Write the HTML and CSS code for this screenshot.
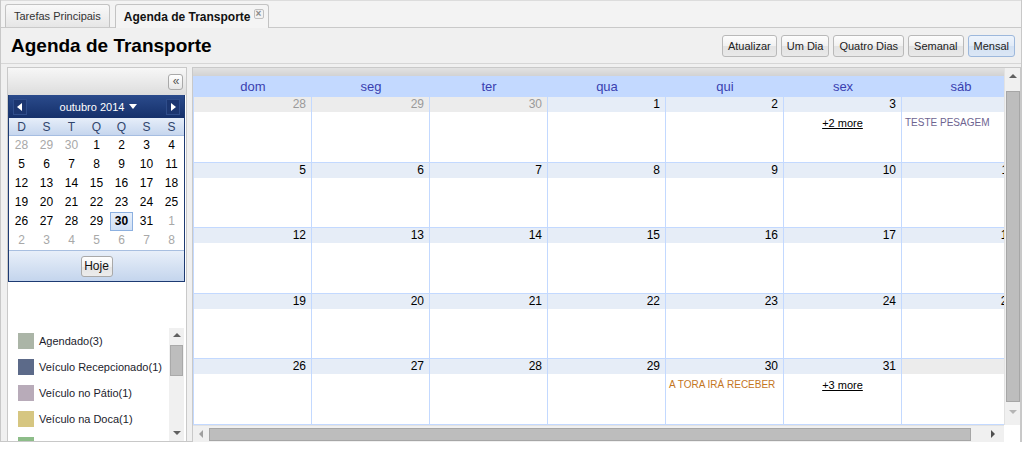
FILE: index.html
```html
<!DOCTYPE html>
<html lang="pt">
<head>
<meta charset="utf-8">
<title>Agenda de Transporte</title>
<link rel="stylesheet" href="styles.css">
</head>
<body>
<div class="app">
  <div class="tabbar">
    <div class="tab">Tarefas Principais</div>
    <div class="tab active">Agenda de Transporte <span class="tab-close">×</span></div>
  </div>
  <div class="main">
    <div class="header">
      <h1 class="title">Agenda de Transporte</h1>
      <div class="btns">
        <button class="btn">Atualizar</button>
        <button class="btn">Um Dia</button>
        <button class="btn">Quatro Dias</button>
        <button class="btn">Semanal</button>
        <button class="btn on">Mensal</button>
      </div>
    </div>
    <div class="content">
      <div class="side">
        <div class="side-bar"><span class="collapse">«</span></div>
        <div class="mini">
          <div class="mini-head">
            <span class="arr"><svg width="6" height="8" viewBox="0 0 6 8"><path d="M5 0 L0 4 L5 8Z" fill="#fff"/></svg></span>
            <span class="month">outubro 2014 <svg width="8" height="5" viewBox="0 0 8 5"><path d="M0 0 H8 L4 5Z" fill="#fff"/></svg></span>
            <span class="arr"><svg width="6" height="8" viewBox="0 0 6 8"><path d="M1 0 L6 4 L1 8Z" fill="#fff"/></svg></span>
          </div>
          <div class="mini-dow"><span>D</span><span>S</span><span>T</span><span>Q</span><span>Q</span><span>S</span><span>S</span></div>
          <div class="mini-days">
            <span class="o">28</span><span class="o">29</span><span class="o">30</span><span>1</span><span>2</span><span>3</span><span>4</span>
            <span>5</span><span>6</span><span>7</span><span>8</span><span>9</span><span>10</span><span>11</span>
            <span>12</span><span>13</span><span>14</span><span>15</span><span>16</span><span>17</span><span>18</span>
            <span>19</span><span>20</span><span>21</span><span>22</span><span>23</span><span>24</span><span>25</span>
            <span>26</span><span>27</span><span>28</span><span>29</span><span class="today">30</span><span>31</span><span class="o">1</span>
            <span class="o">2</span><span class="o">3</span><span class="o">4</span><span class="o">5</span><span class="o">6</span><span class="o">7</span><span class="o">8</span>
          </div>
          <div class="mini-foot"><button class="hoje">Hoje</button></div>
        </div>
        <div class="legend">
          <div class="legend-list">
            <div class="li"><span class="sw" style="background:#abb5a7"></span>Agendado(3)</div>
            <div class="li"><span class="sw" style="background:#5c6a89"></span>Veículo Recepcionado(1)</div>
            <div class="li"><span class="sw" style="background:#b8abb9"></span>Veículo no Pátio(1)</div>
            <div class="li"><span class="sw" style="background:#d6c681"></span>Veículo na Doca(1)</div>
            <div class="li"><span class="sw" style="background:#8dbd89"></span>Veículo Liberado(1)</div>
          </div>
          <div class="lscroll">
            <span class="up"></span>
            <span class="lthumb"></span>
            <span class="down"></span>
          </div>
        </div>
      </div>
      <div class="cal">
        <div class="cal-view">
          <div class="cal-top"></div>
          <div class="cal-inner">
            <div class="dows"><span>dom</span><span>seg</span><span>ter</span><span>qua</span><span>qui</span><span>sex</span><span>sáb</span></div>
            <div class="weeks">
              <div class="week">
                <div class="day o"><div class="num">28</div></div>
                <div class="day o"><div class="num">29</div></div>
                <div class="day o"><div class="num">30</div></div>
                <div class="day"><div class="num">1</div></div>
                <div class="day"><div class="num">2</div></div>
                <div class="day"><div class="num">3</div><a class="more">+2 more</a></div>
                <div class="day"><div class="num">4</div><div class="ev ev-purple">TESTE PESAGEM</div></div>
              </div>
              <div class="week">
                <div class="day"><div class="num">5</div></div>
                <div class="day"><div class="num">6</div></div>
                <div class="day"><div class="num">7</div></div>
                <div class="day"><div class="num">8</div></div>
                <div class="day"><div class="num">9</div></div>
                <div class="day"><div class="num">10</div></div>
                <div class="day"><div class="num">11</div></div>
              </div>
              <div class="week">
                <div class="day"><div class="num">12</div></div>
                <div class="day"><div class="num">13</div></div>
                <div class="day"><div class="num">14</div></div>
                <div class="day"><div class="num">15</div></div>
                <div class="day"><div class="num">16</div></div>
                <div class="day"><div class="num">17</div></div>
                <div class="day"><div class="num">18</div></div>
              </div>
              <div class="week">
                <div class="day"><div class="num">19</div></div>
                <div class="day"><div class="num">20</div></div>
                <div class="day"><div class="num">21</div></div>
                <div class="day"><div class="num">22</div></div>
                <div class="day"><div class="num">23</div></div>
                <div class="day"><div class="num">24</div></div>
                <div class="day"><div class="num">25</div></div>
              </div>
              <div class="week">
                <div class="day"><div class="num">26</div></div>
                <div class="day"><div class="num">27</div></div>
                <div class="day"><div class="num">28</div></div>
                <div class="day"><div class="num">29</div></div>
                <div class="day"><div class="num">30</div><div class="ev ev-orange">A TORA IRÁ RECEBER</div></div>
                <div class="day"><div class="num">31</div><a class="more">+3 more</a></div>
                <div class="day o"><div class="num">1</div></div>
              </div>
            </div>
          </div>
        </div>
        <div class="vscroll">
          <span class="up"></span>
          <span class="vthumb"></span>
          <span class="down"></span>
        </div>
        <div class="hscroll">
          <span class="left"></span>
          <span class="hthumb"></span>
          <span class="right"></span>
        </div>
        <div class="corner"></div>
      </div>
    </div>
  </div>
</div>
</body>
</html>
```
FILE: styles.css
```css
* { box-sizing: border-box; }
body {
  margin: 0;
  font-family: "Liberation Sans", Arial, sans-serif;
  font-size: 11px;
  color: #000;
  background: #fff;
}
.app {
  width: 1022px;
  height: 442px;
  border: 1px solid #c8c8c8;
  border-top: none;
  background: #f0f0f0;
  display: flex;
  flex-direction: column;
}
.tabbar {
  height: 28px;
  display: flex;
  align-items: flex-end;
  gap: 5px;
  padding-left: 4px;
  border-bottom: 1px solid #c9c9c9;
  background: #f3f3f3;
  border-top: 1px solid #dcdcdc;
}
.tab {
  height: 23px;
  border: 1px solid #c3c3c3;
  border-bottom: none;
  border-radius: 3px 3px 0 0;
  background: linear-gradient(#f9f9f9, #e6e6e6);
  padding: 0 8px 0 8px;
  display: flex;
  align-items: center;
  color: #333;
  font-size: 11px;
}
.tab.active {
  background: #f4f4f4;
  font-weight: bold;
  font-size: 12px;
  color: #111;
  height: 24px;
  margin-bottom: -1px;
  padding-left: 8px;
  padding-right: 4px;
}
.tab-close {
  display: inline-flex;
  width: 10px;
  height: 10px;
  margin-left: 3px;
  margin-top: -6px;
  border: 1px solid #c0c0c0;
  border-radius: 2px;
  align-items: center;
  justify-content: center;
  font-size: 10px;
  line-height: 1;
  color: #8a8a8a;
  background: #f2f2f2;
}
.main {
  flex: 1;
  display: flex;
  flex-direction: column;
  padding-left: 6px;
  min-height: 0;
}
.header {
  height: 36px;
  flex: none;
  display: flex;
  align-items: center;
  justify-content: space-between;
  padding-right: 6px;
  padding-top: 1px;
  border-bottom: 1px solid #d6d6d6;
  margin-left: -6px;
  padding-left: 10px;
  margin-bottom: 3px;
}
.title {
  margin: 0;
  font-size: 19px;
  font-weight: bold;
  color: #000;
}
.btns {
  display: flex;
  gap: 4px;
  margin-top: -1px;
}
.btn {
  height: 22px;
  font-family: inherit;
  font-size: 11px;
  color: #222;
  padding: 0 5px;
  border: 1px solid #b9b9b9;
  border-radius: 3px;
  background: linear-gradient(#fdfdfd 0%, #f1f1f1 50%, #e3e3e3 51%, #e9e9e9 100%);
}
.btn.on {
  background: linear-gradient(#eef4fc 0%, #e1ebf8 50%, #d3e1f3 51%, #dbe6f5 100%);
  border-color: #9db8dc;
}
.content {
  flex: 1;
  display: flex;
  gap: 5px;
  min-height: 0;
}
.side {
  width: 180px;
  border: 1px solid #c9c9c9;
  border-bottom: none;
  background: #fff;
  display: flex;
  flex-direction: column;
  overflow: hidden;
}
.side-bar {
  height: 27px;
  flex: none;
  background: linear-gradient(#f7f7f7, #dddddd);
  display: flex;
  justify-content: flex-end;
  align-items: center;
  padding-right: 3px;
}
.collapse {
  width: 15px;
  height: 16px;
  border: 1px solid #a9a9a9;
  border-radius: 3px;
  background: linear-gradient(#fff, #e6e6e6);
  font-size: 12px;
  line-height: 13px;
  text-align: center;
  color: #555;
  letter-spacing: -1px;
}
.mini {
  width: 177px;
  flex: none;
  border: 1px solid #1d3a72;
  border-top: none;
}
.mini-head {
  height: 23px;
  background: linear-gradient(#2b4b8c, #15306a);
  display: flex;
  align-items: center;
  justify-content: space-between;
  padding: 0 4px;
  color: #fff;
}
.arr {
  width: 14px;
  height: 16px;
  background: #1c3670;
  border: 1px solid #2f4d8b;
  display: flex;
  align-items: center;
  justify-content: center;
}
.month {
  font-size: 11px;
  display: flex;
  align-items: center;
  gap: 5px;
  margin-left: 4px;
}
.mini-dow {
  height: 18px;
  display: grid;
  grid-template-columns: repeat(7, 25px);
  align-items: center;
  background: linear-gradient(#e6eef9, #c6d6ee);
  border-bottom: 1px solid #a5bde1;
  color: #30456c;
  font-size: 12px;
  text-align: center;
}
.mini-days {
  display: grid;
  grid-template-columns: repeat(7, 25px);
  grid-auto-rows: 19px;
  background: #fff;
  font-size: 12px;
  text-align: center;
  align-items: center;
}
.mini-days span { line-height: 19px; }
.mini-days .o { color: #a8a8a8; }
.mini-days .today {
  font-weight: bold;
  border: 1px solid #8cb0e0;
  background: linear-gradient(#e7effa, #d1e0f4);
  line-height: 17px;
  margin: 0 1px;
}
.mini-foot {
  height: 31px;
  border-top: 1px solid #a8bfe0;
  background: linear-gradient(#e8eff9, #c4d5ed);
  display: flex;
  align-items: center;
  justify-content: center;
}
.hoje {
  width: 32px;
  height: 21px;
  font-family: inherit;
  font-size: 12px;
  padding: 0;
  color: #111;
  border: 1px solid #a9a9a9;
  border-radius: 3px;
  background: linear-gradient(#fff 0%, #f1f1f1 50%, #e4e4e4 51%, #ececec 100%);
}
.legend {
  margin-top: 46px;
  flex: 1;
  display: flex;
  min-height: 0;
  overflow: hidden;
}
.legend-list {
  flex: 1;
  padding: 0 0 0 10px;
}
.li {
  height: 26px;
  display: flex;
  align-items: center;
  color: #1c1c2c;
  font-size: 11px;
  white-space: nowrap;
}
.sw {
  width: 16px;
  height: 16px;
  margin-right: 5px;
}
.lscroll {
  width: 15px;
  margin-right: 2px;
  background: #f0f0f0;
  display: flex;
  flex-direction: column;
  align-items: center;
}
.lscroll .up, .vscroll .up {
  margin-top: 5px;
  width: 0; height: 0;
  border-left: 4px solid transparent;
  border-right: 4px solid transparent;
  border-bottom: 4px solid #606060;
}
.lthumb {
  margin-top: 8px;
  width: 13px;
  height: 31px;
  background: #bdbdbd;
  border: 1px solid #a9a9a9;
}
.lscroll .down, .vscroll .down {
  margin-top: auto;
  margin-bottom: 6px;
  width: 0; height: 0;
  border-left: 4px solid transparent;
  border-right: 4px solid transparent;
  border-top: 4px solid #606060;
}
.cal {
  width: 829px;
  border: 1px solid #c9c9c9;
  border-bottom: none;
  background: #fff;
  display: grid;
  grid-template-columns: 811px 16px;
  grid-template-rows: 357px 17px;
}
.cal-view {
  overflow: hidden;
  display: flex;
  flex-direction: column;
}
.cal-top {
  height: 8px;
  background: linear-gradient(#e2e2e2, #d2d2d2);
  flex: none;
}
.cal-inner {
  width: 827px;
  border-left: 1px solid #c3d9ff;
  flex: 1;
  display: flex;
  flex-direction: column;
}
.dows {
  height: 21px;
  flex: none;
  background: #c3d9ff;
  display: grid;
  grid-template-columns: repeat(7, 118px);
  align-items: center;
  text-align: center;
  font-size: 13px;
  color: #3a3fb0;
}
.weeks {
  flex: 1;
  display: grid;
  grid-template-rows: repeat(5, 1fr);
}
.week {
  display: grid;
  grid-template-columns: repeat(7, 118px);
  border-bottom: 1px solid #c3d9ff;
}
.day {
  border-right: 1px solid #c3d9ff;
  display: flex;
  flex-direction: column;
}
.num {
  height: 15px;
  background: #e6edf7;
  text-align: right;
  padding-right: 5px;
  font-size: 12px;
  line-height: 15px;
}
.day.o .num {
  background: #ececec;
  color: #9a9a9a;
}
.more {
  margin-top: 5px;
  text-align: center;
  color: #000;
  text-decoration: underline;
  font-size: 11px;
}
.ev {
  margin-top: 5px;
  padding-left: 3px;
  font-size: 10px;
  white-space: nowrap;
}
.ev-purple { color: #6e6490; }
.ev-orange { color: #c4761e; }
.vscroll {
  background: #f0f0f0;
  border-left: 1px solid #e2e2e2;
  display: flex;
  flex-direction: column;
  align-items: center;
}
.vscroll .up { margin-top: 6px; }
.vthumb {
  margin-top: 13px;
  width: 14px;
  height: 311px;
  background: #bdbdbd;
  border: 1px solid #a6a6a6;
}
.vscroll .down { margin-top: 8px; border-top-color: #b5b5b5; margin-bottom: 0; }
.hscroll {
  background: #f0f0f0;
  border-top: 1px solid #e2e2e2;
  display: flex;
  align-items: center;
  padding: 0 6px;
}
.hscroll .left {
  width: 0; height: 0;
  border-top: 4px solid transparent;
  border-bottom: 4px solid transparent;
  border-right: 4px solid #a0a0a0;
}
.hthumb {
  margin-left: 6px;
  width: 762px;
  height: 13px;
  background: #bdbdbd;
  border: 1px solid #a6a6a6;
}
.hscroll .right {
  margin-left: auto;
  margin-right: 3px;
  width: 0; height: 0;
  border-top: 4px solid transparent;
  border-bottom: 4px solid transparent;
  border-left: 4px solid #505050;
}
.corner { background: #fff; }
```
